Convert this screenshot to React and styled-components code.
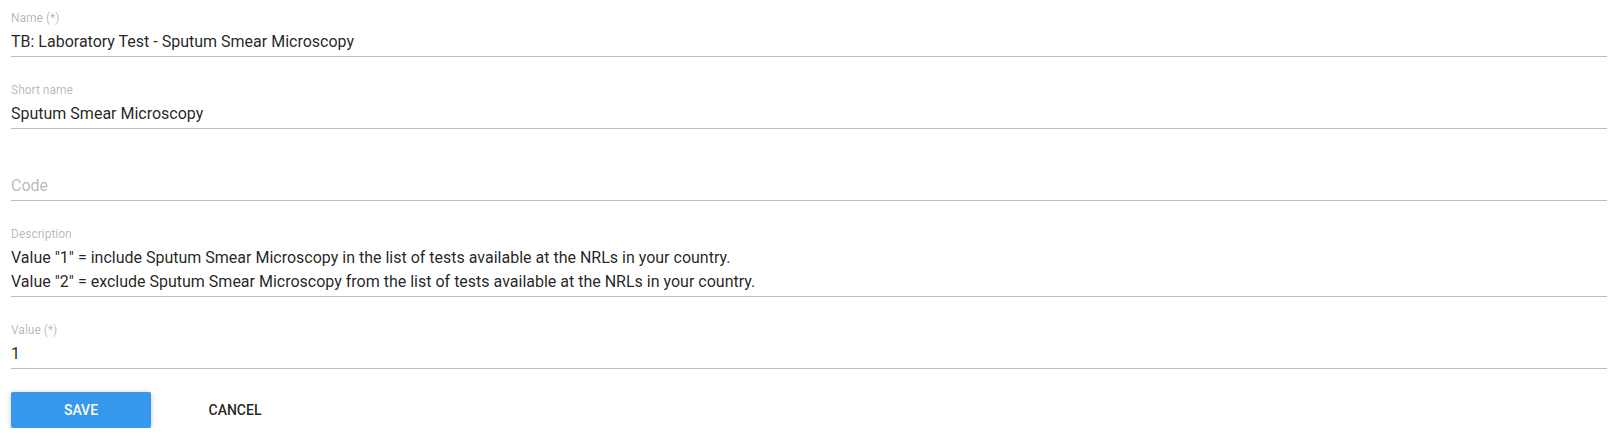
import React from 'react';
import styled, { createGlobalStyle } from 'styled-components';

const GlobalStyle = createGlobalStyle`
  html, body {
    margin: 0;
    padding: 0;
    background: #ffffff;
  }
  body {
    font-family: Roboto, "Liberation Sans", Arial, sans-serif;
  }
`;

const Form = styled.form`
  display: flex;
  flex-direction: column;
  gap: 25px;
  padding: 10px 17px 0 11px;
`;

const Field = styled.div`
  display: flex;
  flex-direction: column;
`;

const Label = styled.label`
  height: 16px;
  font-size: 12px;
  line-height: 16px;
  color: rgba(0, 0, 0, 0.3);
  margin-bottom: 4px;
`;

const Value = styled.div`
  font-size: 16px;
  line-height: 24px;
  min-height: 24px;
  padding-bottom: 2px;
  color: ${(p) => (p.$placeholder ? 'rgba(0, 0, 0, 0.3)' : 'rgba(0, 0, 0, 0.87)')};
  border-bottom: 1px solid #bdbdbd;
  white-space: pre-line;
`;

const Actions = styled.div`
  display: flex;
  align-items: center;
  margin-top: -2px;
`;

const RaisedButton = styled.button`
  width: 140px;
  height: 36px;
  border: none;
  border-radius: 2px;
  background: #3598ec;
  color: #ffffff;
  font-family: Roboto, "Liberation Sans", Arial, sans-serif;
  font-size: 14px;
  font-weight: 500;
  text-transform: uppercase;
  box-shadow: 0 1px 6px rgba(0, 0, 0, 0.12), 0 1px 4px rgba(0, 0, 0, 0.12);
  cursor: pointer;
`;

const FlatButton = styled.button`
  min-width: 88px;
  height: 36px;
  margin-left: 40px;
  padding: 0 16px;
  border: none;
  background: transparent;
  color: rgba(0, 0, 0, 0.87);
  font-family: Roboto, "Liberation Sans", Arial, sans-serif;
  font-size: 14px;
  font-weight: 500;
  text-transform: uppercase;
  cursor: pointer;
`;

const fields = [
  { label: 'Name (*)', value: 'TB: Laboratory Test - Sputum Smear Microscopy' },
  { label: 'Short name', value: 'Sputum Smear Microscopy' },
  { label: '', placeholder: 'Code' },
  {
    label: 'Description',
    value:
      'Value "1" = include Sputum Smear Microscopy in the list of tests available at the NRLs in your country.\nValue "2" = exclude Sputum Smear Microscopy from the list of tests available at the NRLs in your country.',
  },
  { label: 'Value (*)', value: '1' },
];

export default function App() {
  return (
    <>
      <GlobalStyle />
      <Form onSubmit={(e) => e.preventDefault()}>
        {fields.map((f, i) => (
          <Field key={i}>
            <Label>{f.label}</Label>
            <Value $placeholder={!f.value}>{f.value || f.placeholder}</Value>
          </Field>
        ))}
        <Actions>
          <RaisedButton type="submit">Save</RaisedButton>
          <FlatButton type="button">Cancel</FlatButton>
        </Actions>
      </Form>
    </>
  );
}
